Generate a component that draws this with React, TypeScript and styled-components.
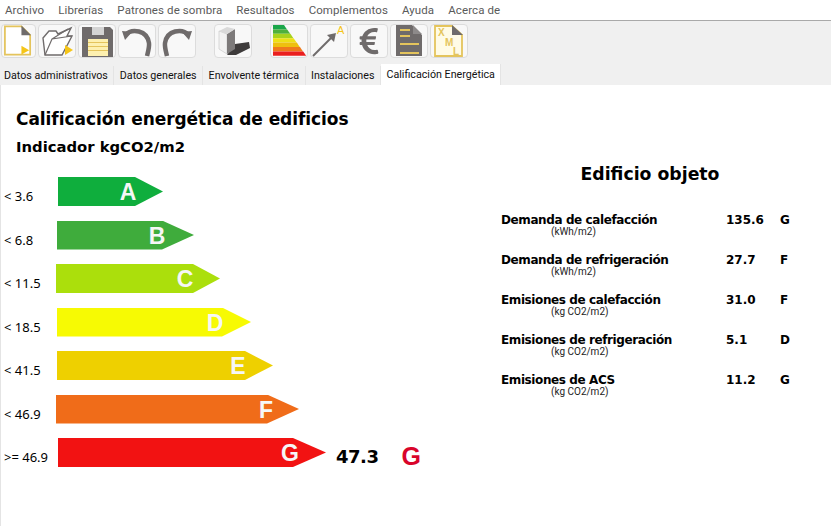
import React from "react";
import styled, { createGlobalStyle } from "styled-components";
import { FaEuroSign } from "react-icons/fa";

const GlobalStyle = createGlobalStyle`
    html, body {
        margin: 0;
        padding: 0;
        background: #ffffff;
    }
`;

const MENU = ["Archivo", "Librerías", "Patrones de sombra", "Resultados", "Complementos", "Ayuda", "Acerca de"];
const TABS = ["Datos administrativos", "Datos generales", "Envolvente térmica", "Instalaciones", "Calificación Energética"];

const BARS = [
    { label: "< 3.6", letter: "A", color: "#0fae3d", left: 58, tip: 163, head: 28, pad: 27 },
    { label: "< 6.8", letter: "B", color: "#3fac3c", left: 57, tip: 194, head: 32, pad: 29 },
    { label: "< 11.5", letter: "C", color: "#abdf0c", left: 56, tip: 220, head: 27, pad: 27 },
    { label: "< 18.5", letter: "D", color: "#f7fa03", left: 57, tip: 251, head: 29, pad: 28 },
    { label: "< 41.5", letter: "E", color: "#eed000", left: 57, tip: 273, head: 28, pad: 27 },
    { label: "< 46.9", letter: "F", color: "#f06c19", left: 56, tip: 299, head: 32, pad: 25 },
    { label: ">= 46.9", letter: "G", color: "#f21212", left: 58, tip: 326, head: 33, pad: 28 },
];

const RESULTS = [
    { name: "Demanda de calefacción", unit: "(kWh/m2)", value: "135.6", grade: "G" },
    { name: "Demanda de refrigeración", unit: "(kWh/m2)", value: "27.7", grade: "F" },
    { name: "Emisiones de calefacción", unit: "(kg CO2/m2)", value: "31.0", grade: "F" },
    { name: "Emisiones de refrigeración", unit: "(kg CO2/m2)", value: "5.1", grade: "D" },
    { name: "Emisiones de ACS", unit: "(kg CO2/m2)", value: "11.2", grade: "G" },
];

const RATING_COLORS = ["#1aa64a", "#4fb03d", "#a9d21c", "#eee016", "#eec00f", "#ef7a1c", "#ea1f1f"];

const GRAY = "#6f6b6b";
const GOLD = "#e4c45c";
const ARROW = "#f5c518";

const NewIcon = () => (
    <svg width="34" height="34" viewBox="0 0 34 34">
        <path d="M3 2H20L29 11V31H3Z" fill="#fff" stroke={GOLD} strokeWidth="1.8" />
        <path d="M20 1V11H30Z" fill={GRAY} />
        <path d="M20 22L28 26.500L20 31Z" fill={ARROW} />
    </svg>
);

const OpenIcon = () => (
    <svg width="34" height="34" viewBox="0 0 34 34">
        <path d="M5 31L3 14L9 7H16L18 10L31 4L27 12L32 12L22 31Z" fill="#fff" stroke={GRAY} strokeWidth="1.4" />
        <path d="M5 31L12 15L32 12M12 15L28 5" fill="none" stroke={GRAY} strokeWidth="1.2" />
        <path d="M25 21L33 26L25 31Z" fill={ARROW} />
    </svg>
);

const SaveIcon = () => (
    <svg width="34" height="34" viewBox="0 0 34 34">
        <path d="M2 3H30L33 6V33H2Z" fill={GRAY} />
        <path d="M12 3H24V11H12Z" fill="#d4d4d4" />
        <path d="M8 15H28V32H8Z" fill="#fdf0b0" />
        <path d="M8 18.500H28M8 22.500H28M8 26.500H28" stroke={GOLD} strokeWidth="1" />
    </svg>
);

const UndoIcon = () => (
    <svg width="34" height="34" viewBox="0 0 34 34">
        <path d="M5 11C12 4 27 6 29 19C29.500 23 28 28 27 32" fill="none" stroke={GRAY} strokeWidth="4.500" />
        <path d="M2 7L12 8L5 16Z" fill={GRAY} />
    </svg>
);

const RedoIcon = () => (
    <svg width="34" height="34" viewBox="0 0 34 34">
        <path d="M29 11C22 4 7 6 5 19C4.500 23 6 28 7 32" fill="none" stroke={GRAY} strokeWidth="4.500" />
        <path d="M32 7L22 8L29 16Z" fill={GRAY} />
    </svg>
);

const BuildingIcon = () => (
    <svg width="34" height="34" viewBox="0 0 34 34">
        <path d="M19 20L33 18L34 24L20 31H11Z" fill="#3e3b3b" />
        <path d="M3 7L11 10V30L3 25Z" fill="#f2f2f2" stroke="#bbbbbb" strokeWidth="0.5" />
        <path d="M11 10L19 5V25L11 30Z" fill="#7d7a7a" />
        <path d="M3 7L11 3L19 5L11 10Z" fill="#d9d9d9" />
    </svg>
);

const RatingIcon = () => (
    <svg width="34" height="34" viewBox="0 0 34 34">
        {RATING_COLORS.map((color, i) => (
            <path
                key={color}
                d={`M1 ${1 + i * 4.4}H${12 + i * 3.2}L${15 + i * 3.2} ${5.400 + i * 4.4}H1Z`}
                fill={color}
            />
        ))}
    </svg>
);

const UpgradeIcon = () => (
    <svg width="34" height="34" viewBox="0 0 34 34">
        <path d="M1 32L21 12" stroke={GRAY} strokeWidth="2" />
        <path d="M15 11L24 9L22 18Z" fill={GRAY} />
        <text x="25" y="10" fontFamily="Liberation Sans, sans-serif" fontSize="11" fill={ARROW}>A</text>
    </svg>
);

const ReportIcon = () => (
    <svg width="34" height="34" viewBox="0 0 34 34">
        <path d="M4 1H20L30 11V32H4Z" fill={GRAY} />
        <path d="M21 1L30 10H21Z" fill="#8d8a8a" />
        <path d="M8 6H18M8 12H18M8 20H27M8 29H27" stroke={GOLD} strokeWidth="1.800" />
    </svg>
);

const XmlIcon = () => (
    <svg width="34" height="34" viewBox="0 0 34 34">
        <path d="M3 2H20L30 11V32H3Z" fill="#fffbe6" stroke={GOLD} strokeWidth="1.8" />
        <path d="M20 1V11H31Z" fill={GRAY} />
        <g fontFamily="Liberation Sans, sans-serif" fontSize="10" fontWeight="700" fill={GOLD}>
            <text x="6" y="12">X</text>
            <text x="13" y="22">M</text>
            <text x="21" y="31">L</text>
        </g>
    </svg>
);

export default function App() {
    return (
        <Page>
            <GlobalStyle />
            <MenuBar>
                {MENU.map((item) => (
                    <MenuItem key={item}>{item}</MenuItem>
                ))}
            </MenuBar>

            <Toolbar>
                <ToolGroup>
                    <ToolButton $narrow><NewIcon /></ToolButton>
                    <ToolButton><OpenIcon /></ToolButton>
                    <ToolButton><SaveIcon /></ToolButton>
                    <ToolButton><UndoIcon /></ToolButton>
                    <ToolButton><RedoIcon /></ToolButton>
                </ToolGroup>
                <ToolGroup>
                    <ToolButton><BuildingIcon /></ToolButton>
                </ToolGroup>
                <ToolGroup>
                    <ToolButton><RatingIcon /></ToolButton>
                    <ToolButton><UpgradeIcon /></ToolButton>
                    <ToolButton><FaEuroSign size={30} color={GRAY} /></ToolButton>
                    <ToolButton><ReportIcon /></ToolButton>
                    <ToolButton><XmlIcon /></ToolButton>
                </ToolGroup>
            </Toolbar>

            <TabBar>
                {TABS.map((tab, i) => (
                    <Tab key={tab} $active={i === TABS.length - 1}>{tab}</Tab>
                ))}
            </TabBar>

            <Content>
                <LeftColumn>
                    <Title>Calificación energética de edificios</Title>
                    <Subtitle>Indicador kgCO2/m2</Subtitle>
                    <BarList>
                        {BARS.map((bar) => (
                            <BarRow key={bar.letter}>
                                <BarLabel>{bar.label}</BarLabel>
                                <Bar
                                    $color={bar.color}
                                    $left={bar.left}
                                    $width={bar.tip - bar.left}
                                    $head={bar.head}
                                    $pad={bar.pad}
                                >
                                    <BarLetter>{bar.letter}</BarLetter>
                                </Bar>
                                {bar.letter === "G" && (
                                    <>
                                        <ResultValue>47.3</ResultValue>
                                        <ResultGrade>G</ResultGrade>
                                    </>
                                )}
                            </BarRow>
                        ))}
                    </BarList>
                </LeftColumn>

                <RightColumn>
                    <BuildingTitle>Edificio objeto</BuildingTitle>
                    <ResultList>
                        {RESULTS.map((row) => (
                            <ResultRow key={row.name}>
                                <ResultName>{row.name}</ResultName>
                                <ResultNumber>{row.value}</ResultNumber>
                                <ResultLetter>{row.grade}</ResultLetter>
                                <ResultUnit>{row.unit}</ResultUnit>
                            </ResultRow>
                        ))}
                    </ResultList>
                </RightColumn>
            </Content>
        </Page>
    );
}

const Page = styled.div`
    display: flex;
    flex-direction: column;
    width: 831px;
    height: 526px;
    overflow: hidden;
    background: #ffffff;
    font-family: "Roboto", sans-serif;
`;

const MenuBar = styled.div`
    display: flex;
    flex: none;
    height: 21px;
    padding-left: 5px;
    gap: 14px;
    align-items: center;
    background: #ffffff;
    border-bottom: 1px solid #a9a9a9;
    box-sizing: border-box;
`;

const MenuItem = styled.span`
    font-size: 11.500px;
    letter-spacing: 0.1px;
    color: #5a5a5a;
`;

const Toolbar = styled.div`
    display: flex;
    flex: none;
    height: 45px;
    padding: 3px 0 0 1px;
    box-sizing: border-box;
    background: #f0f0f0;
`;

const ToolGroup = styled.div`
    display: flex;
    gap: 2px;
    margin-right: 18px;
`;

const ToolButton = styled.div<{ $narrow?: boolean }>`
    display: flex;
    align-items: center;
    justify-content: center;
    width: ${(props) => (props.$narrow ? "35px" : "38px")};
    height: 34px;
    box-sizing: border-box;
    border: 1px solid #dcdcdc;
    border-radius: 4px;
    background: #f8f8f8;
`;

const TabBar = styled.div`
    display: flex;
    flex: none;
    height: 19px;
    background: #f0f0f0;
    box-sizing: border-box;
`;

const Tab = styled.div<{ $active: boolean }>`
    display: flex;
    align-items: center;
    padding: 0 5.500px;
    font-size: 10.700px;
    color: #111111;
    border-right: 1px solid #e4e4e4;
    background: ${(props) => (props.$active ? "#ffffff" : "#f0f0f0")};
    margin-top: ${(props) => (props.$active ? "-2px" : "0")};

    &:first-child {
        padding-left: 4px;
    }
`;

const Content = styled.div`
    display: flex;
    flex: 1;
    border-left: 1px solid #e4e4e4;
`;

const LeftColumn = styled.div`
    width: 499px;
    padding: 23px 0 0 15px;
    box-sizing: border-box;
`;

const Title = styled.h1`
    margin: 0;
    font-family: "DejaVu Sans", sans-serif;
    font-size: 17px;
    letter-spacing: -0.06px;
    line-height: 22px;
    font-weight: 700;
    color: #000000;
`;

const Subtitle = styled.h2`
    margin: 8px 0 0;
    font-family: "DejaVu Sans", sans-serif;
    font-size: 14.800px;
    line-height: 18px;
    font-weight: 700;
    color: #000000;
`;

const BarList = styled.div`
    display: flex;
    flex-direction: column;
    gap: 14.5px;
    margin: 21px 0 0 -15px;
`;

const BarRow = styled.div`
    display: flex;
    align-items: flex-start;
    position: relative;
    height: 29px;
`;

const BarLabel = styled.span`
    position: absolute;
    left: 3px;
    top: 11px;
    font-family: "Noto Sans", sans-serif;
    font-size: 13px;
    line-height: 16px;
    color: #000000;
`;

const Bar = styled.div<{ $color: string; $left: number; $width: number; $head: number; $pad: number }>`
    display: flex;
    align-items: center;
    justify-content: flex-end;
    box-sizing: border-box;
    margin-left: ${(props) => props.$left - 1}px;
    width: ${(props) => props.$width}px;
    height: 29px;
    padding-right: ${(props) => props.$pad}px;
    background: ${(props) => props.$color};
    clip-path: polygon(
        0 0,
        calc(100% - ${(props) => props.$head}px) 0,
        100% 50%,
        calc(100% - ${(props) => props.$head}px) 100%,
        0 100%
    );
`;

const BarLetter = styled.span`
    width: 16px;
    display: flex;
    justify-content: center;
    margin-top: 2px;
    font-family: "Liberation Sans", sans-serif;
    font-size: 23px;
    font-weight: 700;
    color: #f6f6f6;
`;

const ResultValue = styled.span`
    margin: 8px 0 0 10px;
    font-family: "DejaVu Sans", sans-serif;
    font-size: 18px;
    letter-spacing: -0.5px;
    font-weight: 700;
    color: #000000;
`;

const ResultGrade = styled.span`
    margin: 4px 0 0 23px;
    font-family: "Liberation Sans", sans-serif;
    font-size: 25px;
    font-weight: 700;
    color: #d9042b;
`;

const RightColumn = styled.div`
    flex: 1;
    padding-top: 77px;
`;

const BuildingTitle = styled.h2`
    margin: 0;
    width: 300px;
    text-align: center;
    font-family: "DejaVu Sans", sans-serif;
    font-size: 17.300px;
    line-height: 24px;
    font-weight: 700;
    color: #000000;
`;

const ResultList = styled.div`
    display: flex;
    flex-direction: column;
    margin: 27px 0 0 1px;
`;

const ResultRow = styled.div`
    display: grid;
    grid-template-columns: 225px 54px 1fr;
    height: 40px;
    align-content: start;
    font-family: "DejaVu Sans", sans-serif;
    font-size: 12px;
    line-height: 14px;
    font-weight: 700;
    color: #000000;
`;

const ResultName = styled.span`
    letter-spacing: -0.4px;
`;

const ResultNumber = styled.span``;

const ResultLetter = styled.span``;

const ResultUnit = styled.span`
    grid-column: 1 / -1;
    padding-left: 50px;
    font-family: "Roboto", sans-serif;
    font-size: 10px;
    line-height: 10px;
    font-weight: 400;
    color: #222222;
`;
